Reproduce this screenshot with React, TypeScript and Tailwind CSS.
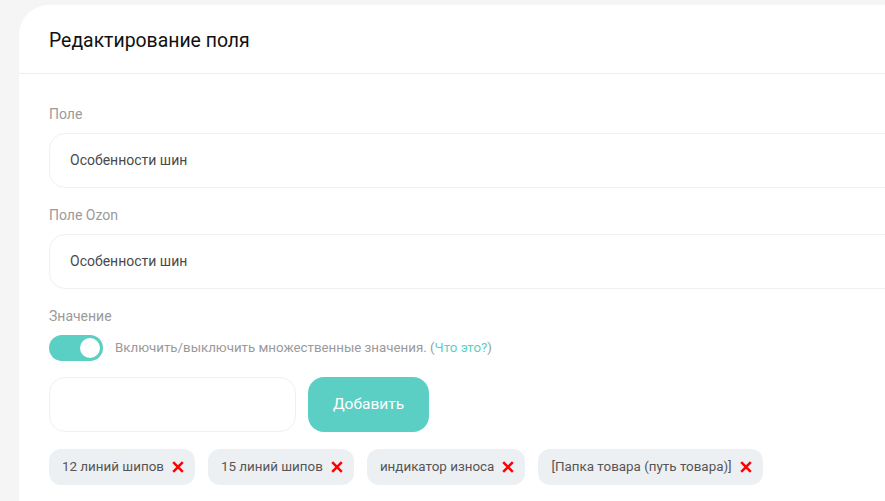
import React from "react";

const Cross = () => (
  <svg width="12" height="12" viewBox="0 0 12 12" className="shrink-0">
    <path d="M1.2 1.2L10.8 10.8M10.8 1.2L1.2 10.8" stroke="#ff0000" strokeWidth="2.5" strokeLinecap="butt" />
  </svg>
);

const chips = ["12 линий шипов", "15 линий шипов", "индикатор износа", "[Папка товара (путь товара)]"];

export default function App() {
  return (
    <div
      className="h-[501px] w-[885px] overflow-hidden bg-[#f5f5f5] pl-[19px] pt-[5px]"
      style={{ fontFamily: "Roboto, 'Noto Sans', sans-serif" }}
    >
      <div className="w-[1000px] h-[600px] bg-white rounded-tl-[30px]">
        <div className="h-[69px] border-b border-[#eeeeee] px-[30px] flex items-center">
          <h1 className="text-[19.4px] leading-[28px] text-[#111111] pt-[4px]">Редактирование поля</h1>
        </div>
        <div className="px-[30px] pt-[30px]">
          <div className="text-[14px] leading-[20px] text-[#9a9a9a]">Поле</div>
          <div className="mt-[9px] h-[55px] w-full rounded-[16px] border border-[#f0f0f0] flex items-center px-[20px] text-[14px] text-[#4a4a4a]">
            Особенности шин
          </div>
          <div className="mt-[17px] text-[14px] leading-[20px] text-[#9a9a9a]">Поле Ozon</div>
          <div className="mt-[9px] h-[55px] w-full rounded-[16px] border border-[#f0f0f0] flex items-center px-[20px] text-[14px] text-[#4a4a4a]">
            Особенности шин
          </div>
          <div className="mt-[17px] text-[14px] leading-[20px] text-[#9a9a9a]">Значение</div>
          <div className="mt-[9px] flex items-center gap-[12px]">
            <div className="w-[54px] h-[26px] rounded-full bg-[#5ccfc5] flex items-center justify-end pr-[3px]">
              <div className="w-[20px] h-[20px] rounded-full bg-white" />
            </div>
            <div className="text-[13.3px] leading-[20px] text-[#9a9a9a]">
              Включить/выключить множественные значения. (<span className="text-[#5ccfc5]">Что это?</span>)
            </div>
          </div>
          <div className="mt-[16px] flex items-center gap-[12px]">
            <div className="w-[247px] h-[55px] rounded-[16px] border border-[#f0f0f0]" />
            <button className="w-[121px] h-[55px] rounded-[16px] bg-[#5ccfc5] text-white text-[15.5px]">Добавить</button>
          </div>
          <div className="mt-[17px] flex items-center gap-[13px]">
            {chips.map((c) => (
              <div
                key={c}
                className="h-[36px] rounded-[12px] bg-[#edf0f3] flex items-center gap-[8px] pl-[13px] pr-[11px] text-[13.4px] text-[#555555]"
              >
                <span>{c}</span>
                <Cross />
              </div>
            ))}
          </div>
        </div>
      </div>
    </div>
  );
}
